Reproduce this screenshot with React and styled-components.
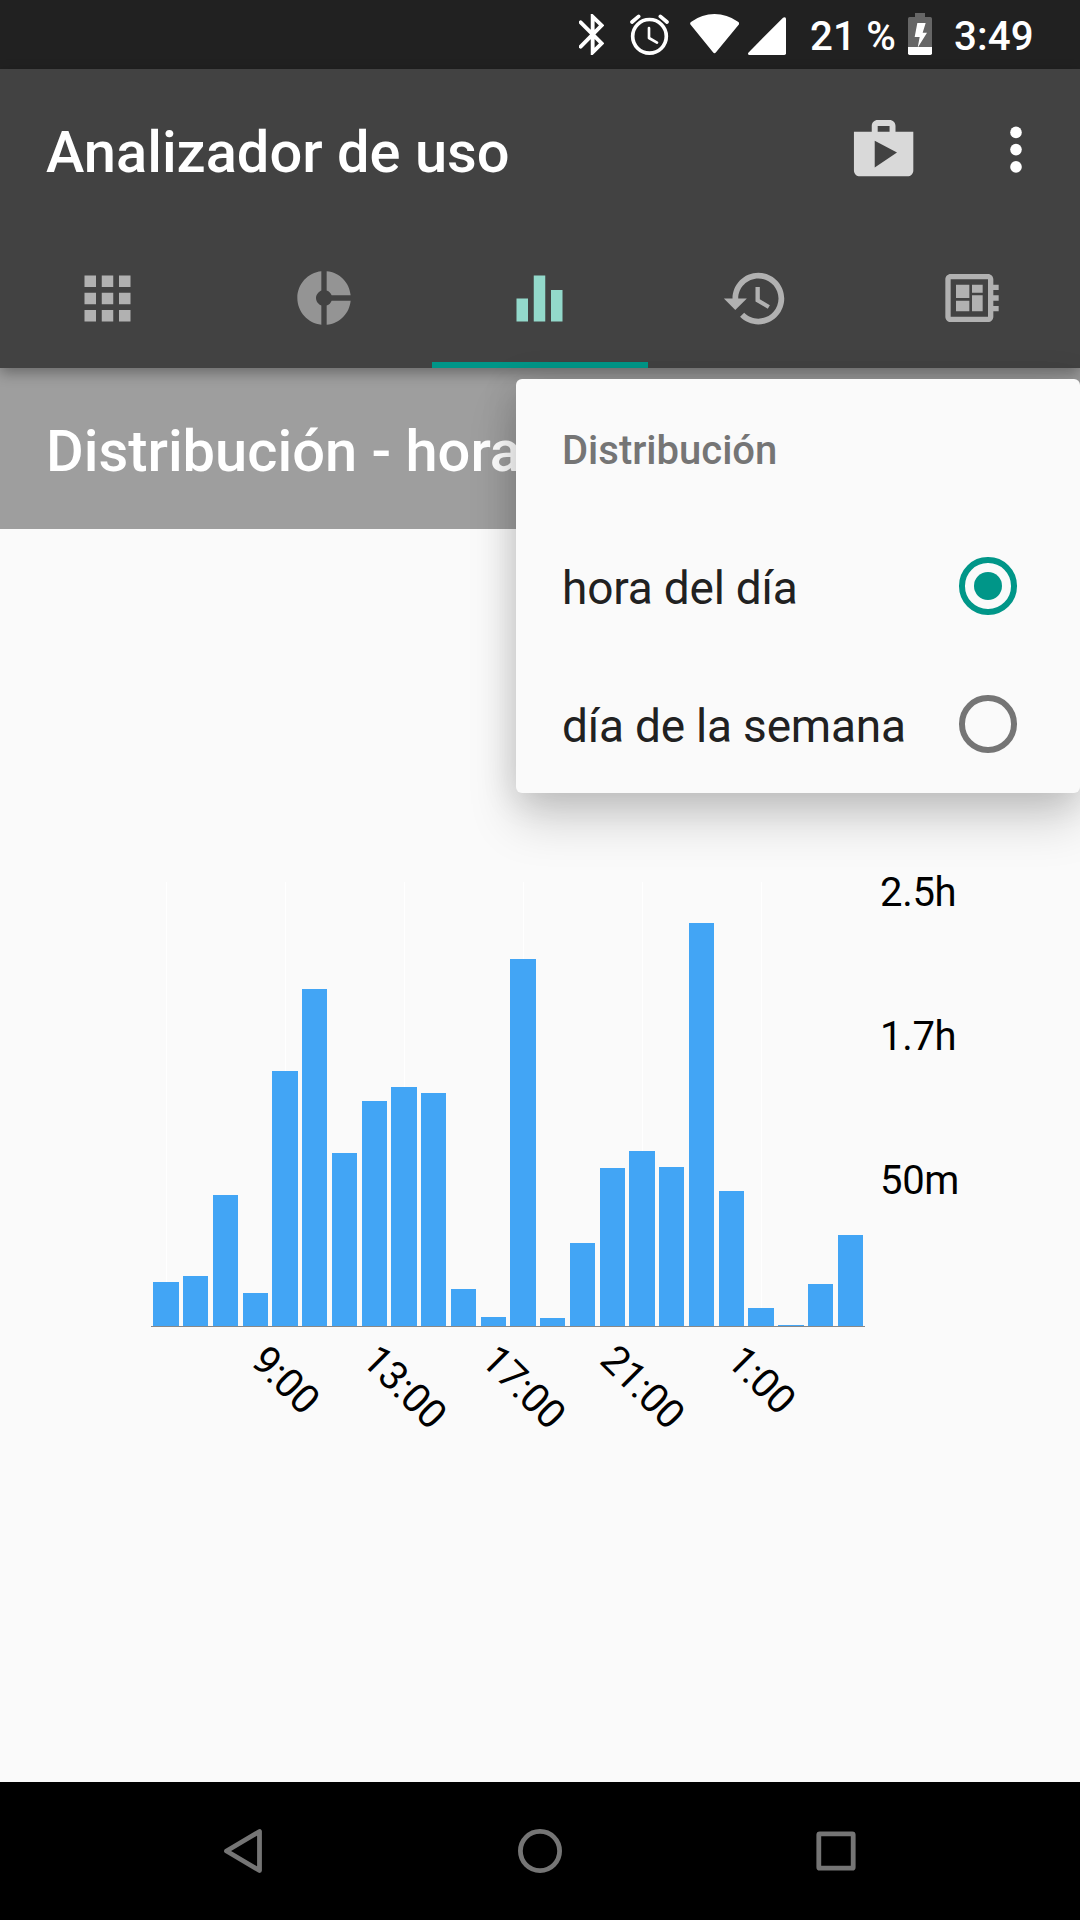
import React from "react";
import styled, { createGlobalStyle } from "styled-components";

const GlobalStyle = createGlobalStyle`
  * { box-sizing: border-box; }
  body { margin: 0; background: #fafafa; }
`;

const Screen = styled.div`
  position: relative;
  display: flex;
  flex-direction: column;
  width: 1080px;
  height: 1920px;
  overflow: hidden;
  background: #fafafa;
  font-family: Roboto, "Noto Sans", sans-serif;
`;

const StatusBar = styled.header`
  display: flex;
  flex: none;
  align-items: flex-start;
  justify-content: flex-end;
  height: 69px;
  padding-right: 46px;
  background: #212121;
  color: #fff;
`;

const StatusIcon = styled.svg`
  flex: none;
  width: ${(p) => p.$w}px;
  height: ${(p) => p.$h}px;
  margin-top: ${(p) => p.$top}px;
  margin-right: ${(p) => p.$gap}px;
`;

const StatusText = styled.span`
  flex: none;
  width: ${(p) => p.$w}px;
  margin-right: ${(p) => p.$gap || 0}px;
  padding-top: 2px;
  font-size: 40.25px;
  font-weight: 500;
  letter-spacing: 0.15px;
  line-height: 69px;
  white-space: pre;
`;

const AppBar = styled.div`
  position: relative;
  z-index: 1;
  flex: none;
  background: #424242;
  box-shadow: 0 5px 13px rgba(0, 0, 0, 0.32);
`;

const Toolbar = styled.div`
  display: flex;
  align-items: center;
  height: 161px;
  padding: 0 58px 0 46px;
`;

const Title = styled.h1`
  flex: 1;
  margin: 0;
  padding-top: 5px;
  color: #fff;
  font-size: 57.8px;
  font-weight: 500;
  line-height: 68px;
  white-space: nowrap;
`;

const ToolbarIcon = styled.svg`
  flex: none;
  width: ${(p) => p.$w}px;
  height: 71.25px;
  margin-right: ${(p) => p.$gap || 0}px;
`;

const Tabs = styled.nav`
  display: grid;
  grid-template-columns: repeat(5, 216px);
  height: 138px;
`;

const Tab = styled.button`
  display: flex;
  align-items: center;
  justify-content: center;
  padding: 4px 1px 0 0;
  border: 0;
  border-bottom: 6px solid ${(p) => (p.$active ? "#009688" : "transparent")};
  background: none;
  color: ${(p) => p.$color};
`;

const TabIcon = styled.svg`
  width: ${(p) => p.$size}px;
  height: ${(p) => p.$size}px;
  fill: currentColor;
`;

const Band = styled.div`
  display: flex;
  flex: none;
  align-items: center;
  height: 161px;
  padding-left: 46px;
  background: #9e9e9e;
`;

const Content = styled.main`
  flex: 1;
  padding: 331px 0 0 120px;
`;

const Chart = styled.svg`
  display: block;
  width: 860px;
  height: 600px;
  font-size: 40px;
  letter-spacing: -0.3px;
`;

const Popup = styled.div`
  position: absolute;
  z-index: 2;
  top: 379px;
  right: 0;
  display: grid;
  grid-template-rows: repeat(3, 138px);
  width: 564px;
  border-radius: 6px;
  background: #fafafa;
  box-shadow: 0 28px 48px rgba(0, 0, 0, 0.17), 0 4px 36px rgba(0, 0, 0, 0.14);
`;

const PopupRow = styled.div`
  display: flex;
  align-items: center;
  justify-content: space-between;
  padding: 0 63.25px 0 46px;
`;

const PopupLabel = styled.span`
  padding-top: ${(p) => (p.$header ? 5 : 3)}px;
  color: ${(p) => (p.$header ? "#757575" : "#212121")};
  font-size: ${(p) => (p.$header ? 40 : 46)}px;
  font-weight: ${(p) => (p.$header ? 500 : 400)};
  letter-spacing: ${(p) => (p.$header ? 0 : -0.2)}px;
  white-space: nowrap;
`;

const Radio = styled.span`
  display: flex;
  align-items: center;
  justify-content: center;
  width: 57.5px;
  height: 57.5px;
  border: 6px solid ${(p) => (p.$checked ? "#009688" : "#757575")};
  border-radius: 50%;

  &::after {
    content: "";
    width: 28.75px;
    height: 28.75px;
    border-radius: 50%;
    background: ${(p) => (p.$checked ? "#009688" : "transparent")};
  }
`;

const NavBar = styled.footer`
  display: grid;
  grid-template-columns: repeat(3, 296px);
  flex: none;
  place-content: center;
  place-items: center;
  height: 138px;
  background: #000;
`;

const NavIcon = styled.svg`
  width: 48px;
  height: 48px;
  fill: none;
  stroke: #757575;
  stroke-width: 4.8;
  stroke-linejoin: round;
`;

const TABS = [
  { size: 69, color: "#b1b1b1", d: "M4 8h4V4H4v4zm6 12h4v-4h-4v4zm-6 0h4v-4H4v4zm0-6h4v-4H4v4zm6 0h4v-4h-4v4zm6-10v4h4V4h-4zm-6 4h4V4h-4v4zm6 6h4v-4h-4v4zm0 6h4v-4h-4v4z" },
  { size: 64, color: "#949494", d: "M11 9.16V2c-5 .5-9 4.79-9 10s4 9.5 9 10v-7.16c-1-.41-2-1.52-2-2.84s1-2.43 2-2.84zM14.86 11H22c-.48-4.75-4-8.53-9-9v7.16c1 .3 1.52.98 1.86 1.84zM13 14.84V22c5-.47 8.52-4.25 9-9h-7.14c-.34.86-.86 1.54-1.86 1.84z" },
  { size: 69, color: "#93d9cb", active: true, d: "M10 20h4V4h-4v16zm-6 0h4v-8H4v8zM16 9v11h4V9h-4z" },
  { size: 69, color: "#b1b1b1", d: "M13 3c-4.97 0-9 4.03-9 9H1l3.89 3.89.07.14L9 12H6c0-3.87 3.13-7 7-7s7 3.13 7 7-3.13 7-7 7c-1.93 0-3.68-.79-4.94-2.06l-1.42 1.42C8.27 19.99 10.51 21 13 21c4.97 0 9-4.03 9-9s-4.03-9-9-9zm-1 5v5l4.28 2.54.72-1.21-3.5-2.08V8H12z" },
  { size: 64, color: "#b1b1b1", d: "M22 9V7h-2V5c0-1.1-.9-2-2-2H4c-1.1 0-2 .9-2 2v14c0 1.1.9 2 2 2h14c1.1 0 2-.9 2-2v-2h2v-2h-2v-2h2v-2h-2V9h2zm-4 10H4V5h14v14zM6 13h5v4H6zm6-6h4v3h-4zM6 7h5v5H6zm6 4h4v6h-4z" },
];

const BARS = [44, 50, 131, 33, 255, 337, 173, 225, 239, 233, 37, 9, 367, 8, 83, 158, 175, 159, 403, 135, 18, 1, 42, 91];
const GRID = [166, 285, 404, 523, 642, 761];
const Y_LABELS = [
  { text: "2.5h", y: 906 },
  { text: "1.7h", y: 1050 },
  { text: "50m", y: 1194 },
];
const X_LABELS = [
  { text: "9:00", x: 286, y: 1379.5 },
  { text: "13:00", x: 405, y: 1386.5 },
  { text: "17:00", x: 524, y: 1386.5 },
  { text: "21:00", x: 643, y: 1386.5 },
  { text: "1:00", x: 762, y: 1379.5 },
];
const BASELINE = 1326;
const FIRST_BAR = 153.23;
const PITCH = 29.76;
const BAR_WIDTH = 25.33;

function UsageChart() {
  return (
    <Chart viewBox="120 860 860 600">
      {GRID.map((x) => (
        <rect key={x} x={x} y="882" width="1" height="444" fill="#fff" />
      ))}
      {BARS.map((h, i) => {
        const left = Math.round(FIRST_BAR + i * PITCH);
        const right = Math.round(FIRST_BAR + i * PITCH + BAR_WIDTH);
        return <rect key={i} x={left} y={BASELINE - h} width={right - left} height={h} fill="#42a5f5" />;
      })}
      <rect x="151" y={BASELINE} width="714" height="1" fill="#888" />
      {Y_LABELS.map((l) => (
        <text key={l.text} x="880" y={l.y}>{l.text}</text>
      ))}
      {X_LABELS.map((l) => (
        <text key={l.text} textAnchor="middle" transform={`translate(${l.x} ${l.y}) rotate(45)`} y="14.3">
          {l.text}
        </text>
      ))}
    </Chart>
  );
}

function StatusIcons() {
  return (
    <>
      <StatusIcon $w={25} $h={41} $top={14} $gap={26} viewBox="57 42 75 123" fill="none" stroke="#fff" strokeWidth="11.5" strokeLinecap="round">
        <path d="M62 67 125 130 98 157V50L125 76 62 140" />
      </StatusIcon>
      <StatusIcon $w={39.33} $h={41} $top={14} $gap={20.67} viewBox="210 42 118 123" fill="none" stroke="#fff" strokeLinecap="round">
        <circle cx="268.5" cy="109" r="50.5" strokeWidth="11" />
        <path d="M216 66 236 49M321 66 301 49" strokeWidth="11" />
        <path d="M267 84V114L291 128" strokeWidth="8" strokeLinejoin="round" />
      </StatusIcon>
      <StatusIcon $w={49.33} $h={40} $top={14} $gap={8.67} viewBox="390 42 148 120" fill="#fff">
        <path d="M392 74Q388 69 394 65 426 42 463.5 42 501 42 534 65 540 69 536 74L468 157Q463.5 163 459 157Z" />
      </StatusIcon>
      <StatusIcon $w={38} $h={38} $top={17} $gap={24} viewBox="564 51 114 114" fill="#fff">
        <path d="M567 165Q562 163 565 158L669 53Q675 49 678 55V160Q678 165 673 165Z" />
      </StatusIcon>
      <StatusText $w={86} $gap={12}>21 %</StatusText>
      <StatusIcon $w={24} $h={42} $top={13} $gap={22} viewBox="1044 39 72 126">
        <path d="M1065 39H1095V51H1111Q1116 51 1116 56V141H1044V56Q1044 51 1049 51H1065Z" fill="#666" />
        <path d="M1044 141H1116V160Q1116 165 1111 165H1049Q1044 165 1044 160Z" fill="#fff" />
        <path d="M1072 69H1097L1088 98H1101L1073 143 1079 111H1064Z" fill="#fff" />
      </StatusIcon>
      <StatusText $w={80}>3:49</StatusText>
    </>
  );
}

export default function App() {
  return (
    <Screen>
      <GlobalStyle />
      <StatusBar>
        <StatusIcons />
      </StatusBar>
      <AppBar>
        <Toolbar>
          <Title>Analizador de uso</Title>
          <ToolbarIcon $w={71.25} $gap={90.5} viewBox="0 0 24 24" fill="#d9d9d9">
            <path d="M16 6V4c0-1.11-.89-2-2-2h-4c-1.11 0-2 .89-2 2v2H2v13c0 1.11.89 2 2 2h16c1.11 0 2-.89 2-2V6h-6zm-6-2h4v2h-4V4zM9 18V9l7.5 4L9 18z" />
          </ToolbarIcon>
          <ToolbarIcon $w={12} viewBox="0 0 12 71.25" fill="#fff">
            <circle cx="6" cy="18.4" r="5.8" />
            <circle cx="6" cy="35.6" r="5.8" />
            <circle cx="6" cy="52.9" r="5.8" />
          </ToolbarIcon>
        </Toolbar>
        <Tabs>
          {TABS.map((t, i) => (
            <Tab key={i} $active={t.active} $color={t.color}>
              <TabIcon $size={t.size} viewBox="0 0 24 24">
                <path d={t.d} />
              </TabIcon>
            </Tab>
          ))}
        </Tabs>
      </AppBar>
      <Band>
        <Title as="h2">Distribución - hora</Title>
      </Band>
      <Content>
        <UsageChart />
      </Content>
      <Popup>
        <PopupRow>
          <PopupLabel $header>Distribución</PopupLabel>
        </PopupRow>
        <PopupRow>
          <PopupLabel>hora del día</PopupLabel>
          <Radio $checked />
        </PopupRow>
        <PopupRow>
          <PopupLabel>día de la semana</PopupLabel>
          <Radio />
        </PopupRow>
      </Popup>
      <NavBar>
        <NavIcon viewBox="220 1827 48 48">
          <path d="M226.5 1851 259.5 1831.5V1870.5Z" />
        </NavIcon>
        <NavIcon viewBox="516 1827 48 48">
          <circle cx="540" cy="1851" r="19.6" />
        </NavIcon>
        <NavIcon viewBox="812 1827 48 48">
          <rect x="818.8" y="1833.8" width="34.4" height="34.4" rx="1" />
        </NavIcon>
      </NavBar>
    </Screen>
  );
}
